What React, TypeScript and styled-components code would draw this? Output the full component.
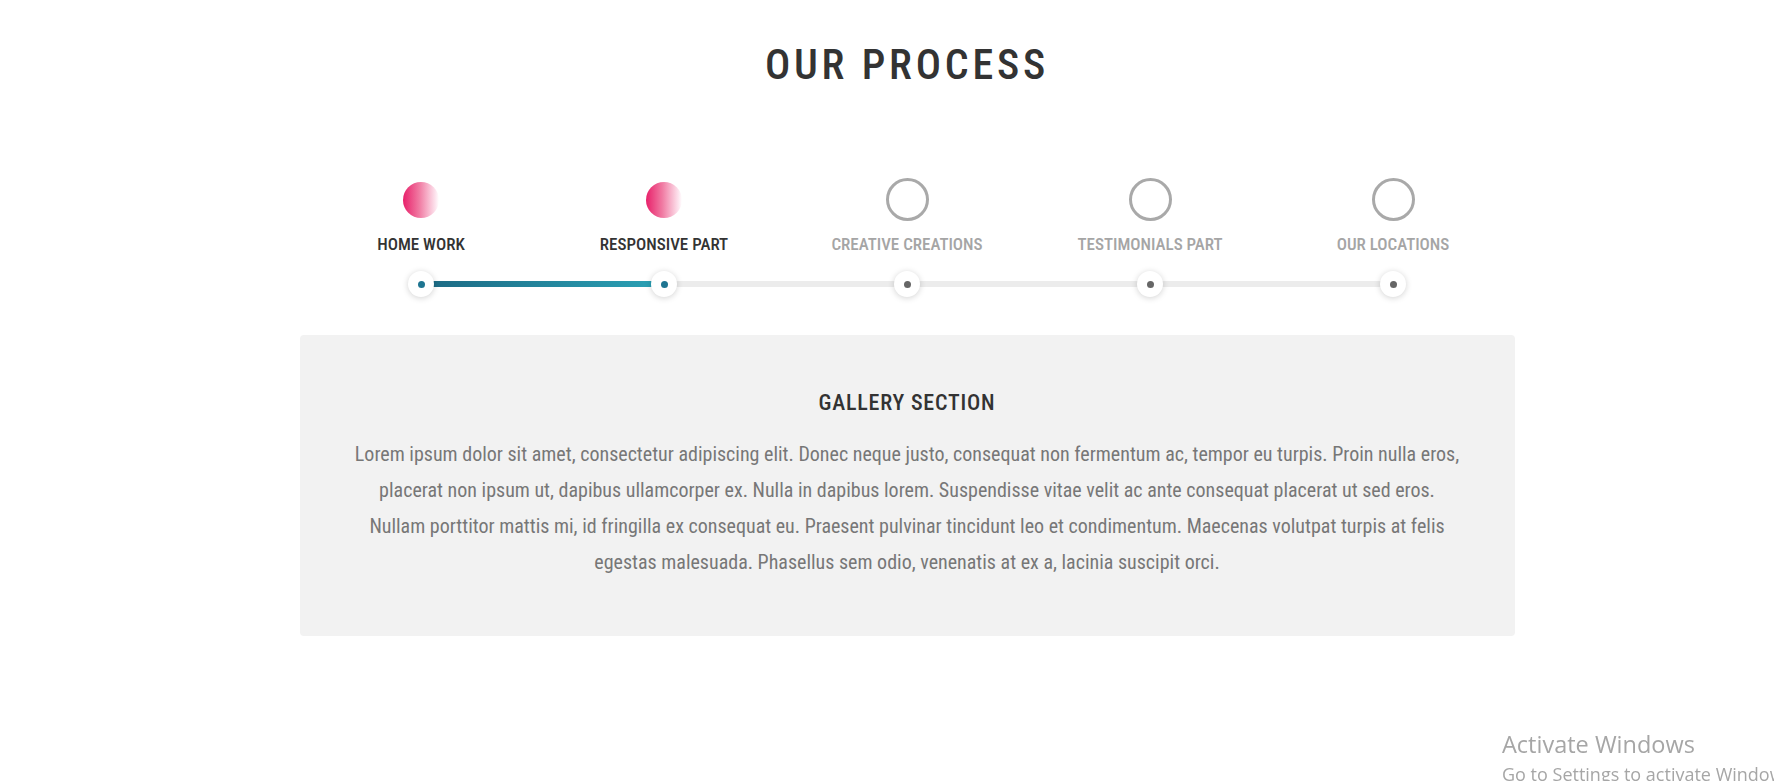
import React from "react";
import styled, { createGlobalStyle } from "styled-components";

const GlobalStyle = createGlobalStyle`
  html, body {
    margin: 0;
    padding: 0;
    background: #ffffff;
  }
  body {
    font-family: "Roboto", "Liberation Sans", sans-serif;
    font-stretch: 75%;
    overflow: hidden;
  }
  * { box-sizing: border-box; }
`;

const Page = styled.main`
  min-height: 781px;
  padding: 44px 0 0 40px;
  display: flex;
  flex-direction: column;
  align-items: center;
`;

const Title = styled.h2`
  margin: 0;
  font-size: 42px;
  line-height: 42px;
  font-weight: 500;
  letter-spacing: 3.8px;
  color: #333333;
  text-transform: uppercase;
`;

const Process = styled.section`
  width: 1215px;
  margin-top: 92px;
  display: flex;
  flex-direction: column;
`;

const Steps = styled.div`
  display: grid;
  grid-template-columns: repeat(5, 1fr);
`;

const Step = styled.div`
  display: flex;
  flex-direction: column;
  align-items: center;
`;

const IconSlot = styled.div`
  height: 43px;
  display: flex;
  align-items: center;
  justify-content: center;
`;

const Bubble = styled.span<{ $done: boolean }>`
  display: block;
  border-radius: 50%;
  width: ${(p) => (p.$done ? "36px" : "43px")};
  height: ${(p) => (p.$done ? "36px" : "43px")};
  background: ${(p) =>
    p.$done
      ? "linear-gradient(to right, #e8206a 0%, #f07aa2 45%, #fde4ee 90%, #ffffff 100%)"
      : "transparent"};
  border: ${(p) => (p.$done ? "none" : "3px solid #a9a9a9")};
`;

const Label = styled.span<{ $done: boolean }>`
  margin-top: 13px;
  font-size: 17px;
  line-height: 20px;
  font-weight: 500;
  color: ${(p) => (p.$done ? "#333333" : "#a5a5a5")};
  text-transform: uppercase;
  white-space: nowrap;
`;

const Track = styled.div`
  position: relative;
  margin-top: 17px;
  display: grid;
  grid-template-columns: repeat(5, 1fr);
  height: 26px;
`;

const Rail = styled.div`
  position: absolute;
  left: 121.5px;
  right: 121.5px;
  top: 10px;
  height: 6px;
  background: #ececec;
`;

const Fill = styled.div`
  position: absolute;
  left: 0;
  top: 0;
  bottom: 0;
  background: linear-gradient(to right, #1c6983, #2ba2b6);
`;

const Knob = styled.span`
  position: relative;
  justify-self: center;
  width: 26px;
  height: 26px;
  border-radius: 50%;
  background: #ffffff;
  box-shadow: 0 1px 6px rgba(0, 0, 0, 0.18);
  display: flex;
  align-items: center;
  justify-content: center;
`;

const KnobDot = styled.span<{ $done: boolean }>`
  width: 7px;
  height: 7px;
  border-radius: 50%;
  background: ${(p) => (p.$done ? "#1e7591" : "#666666")};
`;

const Panel = styled.article`
  margin-top: 38px;
  background: #f2f2f2;
  border-radius: 4px;
  padding: 55px 52px 56px;
  text-align: center;
`;

const PanelTitle = styled.h3`
  margin: 0;
  font-size: 22px;
  line-height: 26px;
  font-weight: 500;
  letter-spacing: 0.8px;
  color: #333333;
  text-transform: uppercase;
`;

const PanelText = styled.p`
  margin: 20px 0 0;
  font-size: 20px;
  line-height: 36px;
  font-weight: 400;
  color: #777777;
`;

const Watermark = styled.div`
  position: fixed;
  left: 1502px;
  top: 730px;
  font-family: "Open Sans", "Noto Sans", sans-serif;
  font-stretch: 100%;
  font-weight: 400;
  color: #a6a6a6;
  white-space: nowrap;
`;

const WatermarkMain = styled.div`
  font-size: 23.5px;
  line-height: 28px;
`;

const WatermarkSub = styled.div`
  margin-top: 5px;
  font-size: 18px;
  line-height: 22px;
`;

const steps = [
  "Home Work",
  "Responsive Part",
  "Creative Creations",
  "Testimonials Part",
  "Our Locations",
];
const current = 1;

export default function App() {
  return (
    <>
      <GlobalStyle />
      <Page>
        <Title>Our Process</Title>
        <Process>
          <Steps>
            {steps.map((s, i) => (
              <Step key={s}>
                <IconSlot>
                  <Bubble $done={i <= current} />
                </IconSlot>
                <Label $done={i <= current}>{s}</Label>
              </Step>
            ))}
          </Steps>
          <Track>
            <Rail>
              <Fill style={{ width: `${(current / (steps.length - 1)) * 100}%` }} />
            </Rail>
            {steps.map((s, i) => (
              <Knob key={s}>
                <KnobDot $done={i <= current} />
              </Knob>
            ))}
          </Track>
          <Panel>
            <PanelTitle>Gallery Section</PanelTitle>
            <PanelText>
              Lorem ipsum dolor sit amet, consectetur adipiscing elit. Donec neque justo, consequat non
              fermentum ac, tempor eu turpis. Proin nulla eros, placerat non ipsum ut, dapibus ullamcorper
              ex. Nulla in dapibus lorem. Suspendisse vitae velit ac ante consequat placerat ut sed eros.
              Nullam porttitor mattis mi, id fringilla ex consequat eu. Praesent pulvinar tincidunt leo et
              condimentum. Maecenas volutpat turpis at felis egestas malesuada. Phasellus sem odio,
              venenatis at ex a, lacinia suscipit orci.
            </PanelText>
          </Panel>
        </Process>
      </Page>
      <Watermark>
        <WatermarkMain>Activate Windows</WatermarkMain>
        <WatermarkSub>Go to Settings to activate Windows.</WatermarkSub>
      </Watermark>
    </>
  );
}
